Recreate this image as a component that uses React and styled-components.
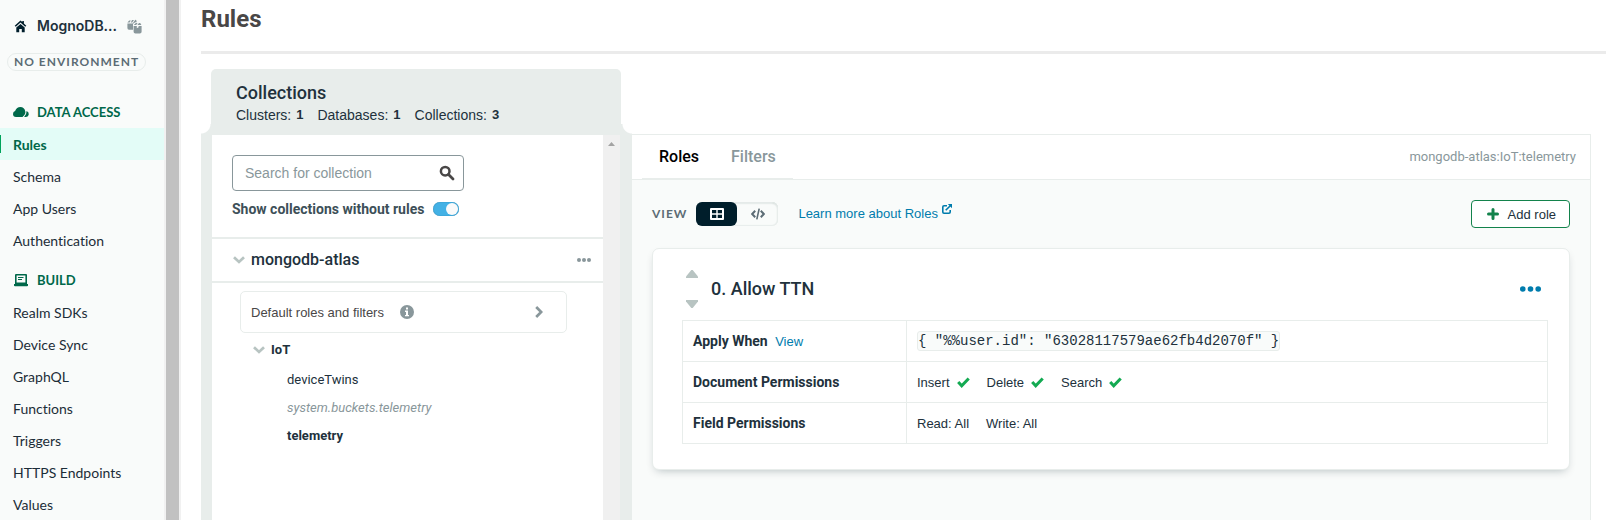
import React from "react";
import styled, { createGlobalStyle, css } from "styled-components";

const Global = createGlobalStyle`
  *, *::before, *::after { box-sizing: border-box; }
  body { margin: 0; background: #fff; }
  body, button, input { font-family: "Liberation Sans", Arial, sans-serif; }
  button { padding: 0; border: 0; background: none; color: inherit; cursor: pointer; }
  h1, h2, h3, ul { margin: 0; padding: 0; }
  ul { list-style: none; }
  a { text-decoration: none; }
  svg { display: block; flex: none; }
`;

const Shell = styled.div`
  display: flex;
  height: 100vh;
  overflow: hidden;
  color: #21313c;
  font-size: 13px;
`;

/* Sidebar */
const Sidebar = styled.nav`
  flex: none;
  width: 164px;
  background: #f9fbfa;
  font-family: Lato, sans-serif;
  font-variant-ligatures: none;
  overflow: hidden;
`;

const AppHeader = styled.div`
  display: flex;
  align-items: center;
  height: 52px;
  padding: 0 22px 0 14px;
  color: #001e2b;
`;

const AppName = styled.span`
  flex: 1;
  margin-left: 10px;
  font: 600 14px/20px Inter, sans-serif;
  color: #21313c;
`;

const Environment = styled.div`
  display: inline-block;
  margin: 1px 0 0 7px;
  padding: 0 6px;
  border: 1px solid #e8edeb;
  border-radius: 9px;
  color: #5c6c75;
  font-size: 12px;
  font-weight: 700;
  line-height: 16px;
  letter-spacing: 1px;
`;

const SectionTitle = styled.h2`
  display: flex;
  align-items: center;
  gap: 8px;
  height: 32px;
  padding-left: 13px;
  color: #00684a;
  font-size: 13px;
  font-weight: 700;
`;

const Section = styled.section`
  margin-top: ${(p) => (p.$first ? "25px" : "8px")};
`;

const NavLink = styled.a`
  display: flex;
  align-items: center;
  height: 32px;
  padding-left: 13px;
  color: #1c2d38;
  font-size: 14px;
  ${(p) =>
    p.$active &&
    css`
      background: linear-gradient(#00a35c, #00a35c) left center / 1px 18px no-repeat, #e3fcf7;
      color: #00684a;
      font-weight: 700;
    `}
`;

const PageScroll = styled.div`
  flex: none;
  width: 17px;
  padding: 0 2px;
  background: #f1f1f1;
  &::before {
    content: "";
    display: block;
    height: 100%;
    background: #c1c1c1;
  }
`;

/* Main column */
const Main = styled.main`
  flex: 1;
  min-width: 0;
  display: flex;
  flex-direction: column;
  padding-left: 20px;
`;

const PageTitle = styled.h1`
  height: 54px;
  padding-top: 5px;
  border-bottom: 3px solid #ebebeb;
  color: #494747;
  font: 700 24px/28px Roboto, sans-serif;
`;

const Workspace = styled.div`
  flex: 1;
  min-height: 0;
  display: flex;
  align-items: stretch;
  padding: 15px 15px 0 0;
`;

const CollectionsColumn = styled.div`
  flex: none;
  width: 431px;
  display: flex;
  flex-direction: column;
`;

const TabRow = styled.div`
  display: flex;
  align-items: flex-end;
`;

const Notch = styled.span`
  flex: none;
  width: ${(p) => (p.$side === "left" ? "10px" : "11px")};
  height: 10px;
  background: radial-gradient(circle at ${(p) => (p.$side === "left" ? "0 0" : "100% 0")}, transparent 9px, #e8edeb 10px);
`;

const CollectionsTab = styled.header`
  flex: 1;
  height: 65px;
  padding: 14px 25px 0;
  border-radius: 5px 5px 0 0;
  background: #e8edeb;
`;

const CollectionsTitle = styled.h2`
  font: 500 18px/20px Roboto, sans-serif;
`;

const Stats = styled.dl`
  display: flex;
  gap: 14px;
  margin: 0;
  font-size: 14px;
  line-height: 24px;
`;

const Stat = styled.div`
  display: flex;
  gap: 5px;
  dd { margin: 0; font-weight: 700; font-size: 13px; }
`;

const CollectionsFrame = styled.div`
  flex: 1;
  min-height: 0;
  display: flex;
  border: solid #e8edeb;
  border-width: 1px 12px 0 11px;
`;

const CollectionsPanel = styled.div`
  flex: 1;
  min-width: 0;
`;

const PanelScroll = styled.div`
  flex: none;
  width: 17px;
  padding: 7px 5px;
  background: #f0f0f0;
`;

const Filters = styled.div`
  padding: 20px 20px 0;
  height: 102px;
`;

const SearchBox = styled.label`
  display: flex;
  align-items: center;
  width: 232px;
  height: 36px;
  padding: 0 8px 0 12px;
  border: 1px solid #89979b;
  border-radius: 4px;
  input {
    flex: 1;
    min-width: 0;
    padding: 0;
    border: 0;
    outline: 0;
    background: none;
    font-size: 14px;
    color: #21313c;
  }
  input::placeholder { color: #89979b; opacity: 1; }
`;

const SwitchLabel = styled.label`
  display: flex;
  align-items: center;
  gap: 9px;
  margin-top: 10px;
  color: #3d4f58;
  font: 700 14px/16px Roboto, sans-serif;
`;

const Switch = styled.input`
  appearance: none;
  display: flex;
  justify-content: flex-end;
  width: 26px;
  height: 14px;
  margin: 0;
  padding: 1px;
  border-radius: 7px;
  background: #43b1e5;
  box-shadow: inset 0 0 1px #0b5c85;
  &::before {
    content: "";
    width: 12px;
    height: 12px;
    border-radius: 50%;
    background: #fafafa;
  }
`;

const ClusterRow = styled.div`
  display: flex;
  align-items: center;
  height: 46px;
  padding: 0 12px 0 21px;
  border: solid #e8edeb;
  border-width: 2px 0;
`;

const ClusterName = styled.h3`
  flex: 1;
  margin-left: 6px;
  font: 500 16px/20px Roboto, sans-serif;
`;

const DefaultRoles = styled.button`
  display: flex;
  align-items: center;
  width: 327px;
  height: 42px;
  margin: 8px 0 0 28px;
  padding: 0 23px 0 10px;
  border: 1px solid #e8edeb;
  border-radius: 5px;
  color: #494747;
  font-size: 13px;
  span { margin-right: 16px; }
  svg:last-child { margin-left: auto; }
`;

const DatabaseRow = styled.div`
  display: flex;
  align-items: center;
  gap: 6px;
  height: 33px;
  padding-left: 41px;
  font: 700 13px/16px Roboto, sans-serif;
`;

const CollectionLink = styled.a`
  display: block;
  height: 28px;
  padding-left: 75px;
  font: 13px/28px Roboto, sans-serif;
  color: ${(p) => (p.$system ? "#89979b" : "#21313c")};
  font-style: ${(p) => (p.$system ? "italic" : "normal")};
  font-weight: ${(p) => (p.$active ? 700 : 400)};
`;

/* Rules panel */
const RulesPanel = styled.section`
  flex: 1;
  min-width: 0;
  margin-top: 65px;
  border: solid #e8edeb;
  border-width: 1px 1px 0 0;
  background: #f9fbfa;
`;

const RulesHeader = styled.header`
  display: flex;
  justify-content: space-between;
  align-items: center;
  height: 45px;
  padding: 0 14px 0 10px;
  border-bottom: 1px solid #e8edeb;
  background: #fff;
  color: #89979b;
`;

const Tabs = styled.div`
  display: flex;
  align-self: stretch;
  gap: 32px;
  padding: 0 17px;
  border-bottom: 1px solid #e8edeb;
`;

const Tab = styled.button`
  color: ${(p) => (p["aria-selected"] ? "#000" : "#89979b")};
  font: 500 16px/20px Roboto, sans-serif;
`;

const Crumb = styled.span`
  font: 400 13px/20px Roboto, sans-serif;
`;

const Toolbar = styled.div`
  display: flex;
  align-items: center;
  height: 68px;
  padding: 0 20px;
`;

const ViewLabel = styled.span`
  margin-right: 9px;
  color: #5c6c75;
  font: 700 12px/20px Lato, sans-serif;
  letter-spacing: 1px;
`;

const Segmented = styled.div`
  display: flex;
  border-radius: 6px;
  background: #f9fbfa;
  box-shadow: inset 0 0 1px 1px #e8edeb, inset 0 1px 2px #b8c4c2;
`;

const Segment = styled.button`
  display: grid;
  place-items: center;
  width: 41px;
  height: 24px;
  border-radius: 6px;
  color: ${(p) => (p["aria-pressed"] ? "#fff" : "#5c6c75")};
  background: ${(p) => (p["aria-pressed"] ? "#001e2b" : "transparent")};
`;

const LearnLink = styled.a`
  display: flex;
  gap: 4px;
  margin-left: 20px;
  color: #007cad;
  line-height: 20px;
`;

const AddRole = styled.button`
  display: flex;
  align-items: center;
  gap: 9px;
  height: 28px;
  margin-left: auto;
  padding: 0 13px 0 15px;
  border: 1px solid #13834c;
  border-radius: 4px;
  background: #fff;
  color: #21313c;
  font-size: 13px;
  svg { color: #13834c; }
`;

const RoleCard = styled.article`
  margin: 0 20px;
  padding: 15px 21px 25px 29px;
  border: 1px solid #e8edeb;
  border-radius: 7px;
  background: #fff;
  box-shadow: 0 4px 10px -4px rgba(0, 30, 43, 0.3);
`;

const RoleHeader = styled.header`
  display: flex;
  align-items: center;
  height: 49px;
  margin-bottom: 7px;
  padding: 0 7px 0 4px;
`;

const Reorder = styled.div`
  display: flex;
  flex-direction: column;
  gap: 22px;
  color: #b8c4c2;
  button { display: block; }
`;

const RoleTitle = styled.h2`
  flex: 1;
  margin-left: 13px;
  font: 500 18px/24px Roboto, sans-serif;
`;

const DotsButton = styled.button`
  color: ${(p) => (p.$accent ? "#007cad" : "#89979b")};
`;

const Permissions = styled.table`
  width: 100%;
  border-collapse: collapse;
  th, td {
    height: 41px;
    padding: 0 10px;
    border: 1px solid #e8edeb;
    text-align: left;
  }
  th { width: 224px; font: 700 14px/20px Roboto, sans-serif; white-space: nowrap; }
  th a { margin-left: 4px; color: #007cad; font: 13px/20px "Liberation Sans", Arial, sans-serif; }
`;

const Expression = styled.code`
  display: inline-block;
  border: 1px solid #e8edeb;
  border-radius: 3px;
  background: #f9fbfa;
  font: 14px/18px "Liberation Mono", monospace;
  white-space: nowrap;
`;

const Grants = styled.div`
  display: flex;
  gap: 17px;
`;

const Grant = styled.span`
  display: flex;
  align-items: center;
  gap: 7px;
`;

const HomeIcon = () => (
  <svg width="13" height="13" viewBox="0 0 13 13" fill="currentColor">
    <path d="M6.5.5 0.7 5.7l1.1 1L6.5 2.6l4.7 4.1 1.1-1L9.9 3.500V1H8.300v1.100z" />
    <path d="M6.500 4 2.300 7.600v4.700h2.900V9h2.600v3.300h2.900V7.600z" />
  </svg>
);

const CubesIcon = () => (
  <svg width="15" height="15" viewBox="0 0 15 15" fill="#89979b">
    <path d="M2.200 1.500h1.600L2.600 3.500H.4zM5 1h2L5.200 3.500H3.800zM8.300.8q1 0 1.200 1.200l.2 1.200H8.300L6 4.700v6H2q-1.600 0-1.600-1.600V4.500h5.200z" />
    <path d="M8.800 4h1.800L9.200 6H6.800zM12 4h1.200l1.200 2h-4z" />
    <path d="M6.600 6.900h3.200v2.400l1.800-1V6.900h3v5.800q0 1.800-1.800 1.800H8.400q-1.800 0-1.800-1.800z" />
  </svg>
);

const CloudIcon = () => (
  <svg width="16" height="12" viewBox="0 0 16 12" fill="currentColor">
    <path d="M3 11Q0 10.700 0 7.900 0 5.500 2.100 4.900 3.700 1 7.300 1q4.200 0 5 4.600.6 2.800-2.800 5.400z" />
    <path d="M13.600 5q2.300.9 2.200 3.200-.3 2.400-2.800 2.800h-1.900q2.600-2.300 2.500-6z" />
  </svg>
);

const LaptopIcon = () => (
  <svg width="16" height="13" viewBox="0 0 16 13" fill="currentColor">
    <path fillRule="evenodd" d="M3 0h10q1 0 1 1v9H2V1q0-1 1-1zM3.600 1.500v7h8.800v-7z" />
    <path d="M1 10h14v1.500q0 .8-1 .8H2q-1 0-1-.8zM5 3h5.500v1H5zM5 5h4v1H5z" />
  </svg>
);

const SearchIcon = () => (
  <svg width="16" height="16" viewBox="0 0 16 16" fill="none" stroke="#494747">
    <circle cx="6.200" cy="6.200" r="4.300" strokeWidth="2.500" />
    <path d="m9.500 9.500 4.500 4.500" strokeWidth="2.800" strokeLinecap="round" />
  </svg>
);

const ChevronDown = () => (
  <svg width="12" height="8" viewBox="0 0 12 8" fill="none" stroke="#b8c4c2" strokeWidth="2.700">
    <path d="m1 1.200 5 4.800 5-4.800" />
  </svg>
);

const ChevronRight = () => (
  <svg width="8" height="12" viewBox="0 0 8 12" fill="none" stroke="#89979b" strokeWidth="2.700">
    <path d="m1.200 1 5 5-5 5" />
  </svg>
);

const InfoIcon = () => (
  <svg width="14" height="14" viewBox="0 0 14 14">
    <circle cx="7" cy="7" r="7" fill="#89979b" />
    <path d="M6 2.500h2v2H6zM5 5.500h3v4.400h1v1.400H5V9.900h1V7H5z" fill="#fff" />
  </svg>
);

const Dots = ({ size = 14, r = 2 }) => (
  <svg width={size} height={6} viewBox={`0 0 ${size} 6`} fill="currentColor">
    <circle cx={r} cy="3" r={r} />
    <circle cx={size / 2} cy="3" r={r} />
    <circle cx={size - r} cy="3" r={r} />
  </svg>
);

const Triangle = ({ down, width = 12, height = 8 }) => (
  <svg width={width} height={height} viewBox="0 0 12 8" fill="currentColor">
    <path d={down ? "M0 0h12v1.500L6.700 8H5.300L0 1.500z" : "M0 8h12V6.500L6.700 0H5.300L0 6.500z"} />
  </svg>
);

const GridIcon = () => (
  <svg width="14" height="12" viewBox="0 0 14 12" fill="currentColor">
    <path fillRule="evenodd" d="M1 0h12q1 0 1 1v10q0 1-1 1H1q-1 0-1-1V1q0-1 1-1zM2 2v3.300h4.300V2zM7.700 2v3.300H12V2zM2 6.700V10h4.300V6.700zM7.700 6.700V10H12V6.700z" />
  </svg>
);

const CodeIcon = () => (
  <svg width="14" height="12" viewBox="0 0 14 12" fill="none" stroke="currentColor" strokeWidth="2">
    <path d="M4.200 2.800 1.200 6l3 3.200M9.800 2.800l3 3.200-3 3.200" />
    <path d="M8.200.6 5.800 11.400" strokeWidth="1.600" />
  </svg>
);

const ExternalIcon = () => (
  <svg width="10" height="10" viewBox="0 0 10 10" fill="none" stroke="currentColor" strokeWidth="1.600">
    <path d="M5 1.700H2Q.8 1.700.8 3v5Q.8 9.200 2 9.200h5Q8.200 9.200 8.200 8V6M3.700 6.300 8.300 1.700" />
    <path d="M5.800 0H10v4.200z" fill="currentColor" stroke="none" />
  </svg>
);

const PlusIcon = () => (
  <svg width="12" height="12" viewBox="0 0 12 12" fill="none" stroke="currentColor" strokeWidth="3" strokeLinecap="round">
    <path d="M6 1.500v9M1.500 6h9" />
  </svg>
);

const CheckIcon = () => (
  <svg width="13" height="11" viewBox="0 0 13 11" fill="none" stroke="#13aa52" strokeWidth="3">
    <path d="m1.200 5 3.500 3.800 7-7.300" />
  </svg>
);

const buildLinks = ["Realm SDKs", "Device Sync", "GraphQL", "Functions", "Triggers", "HTTPS Endpoints", "Values"];
const accessLinks = ["Rules", "Schema", "App Users", "Authentication"];
const stats = [["Clusters:", 1], ["Databases:", 1], ["Collections:", 3]];

const NavSection = ({ icon, title, links, active, first }) => (
  <Section $first={first}>
    <SectionTitle>{icon}{title}</SectionTitle>
    <ul>
      {links.map((name) => (
        <li key={name}>
          <NavLink href="#" $active={name === active}>{name}</NavLink>
        </li>
      ))}
    </ul>
  </Section>
);

export default function App() {
  return (
    <>
      <Global />
      <Shell>
        <Sidebar>
          <AppHeader>
            <HomeIcon />
            <AppName>MognoDB...</AppName>
            <CubesIcon />
          </AppHeader>
          <Environment>NO ENVIRONMENT</Environment>
          <NavSection first icon={<CloudIcon />} title="DATA ACCESS" links={accessLinks} active="Rules" />
          <NavSection icon={<LaptopIcon />} title="BUILD" links={buildLinks} />
        </Sidebar>
        <PageScroll />
        <Main>
          <PageTitle>Rules</PageTitle>
          <Workspace>
            <CollectionsColumn>
              <TabRow>
                <Notch $side="left" />
                <CollectionsTab>
                  <CollectionsTitle>Collections</CollectionsTitle>
                  <Stats>
                    {stats.map(([name, value]) => (
                      <Stat key={name}><dt>{name}</dt><dd>{value}</dd></Stat>
                    ))}
                  </Stats>
                </CollectionsTab>
                <Notch $side="right" />
              </TabRow>
              <CollectionsFrame>
                <CollectionsPanel>
                  <Filters>
                    <SearchBox>
                      <input type="text" aria-label="Search for collection" placeholder="Search for collection" />
                      <SearchIcon />
                    </SearchBox>
                    <SwitchLabel>
                      Show collections without rules
                      <Switch type="checkbox" defaultChecked />
                    </SwitchLabel>
                  </Filters>
                  <ClusterRow>
                    <ChevronDown />
                    <ClusterName>mongodb-atlas</ClusterName>
                    <DotsButton aria-label="Cluster actions"><Dots /></DotsButton>
                  </ClusterRow>
                  <DefaultRoles>
                    <span>Default roles and filters</span>
                    <InfoIcon />
                    <ChevronRight />
                  </DefaultRoles>
                  <DatabaseRow><ChevronDown />IoT</DatabaseRow>
                  <CollectionLink href="#">deviceTwins</CollectionLink>
                  <CollectionLink href="#" $system>system.buckets.telemetry</CollectionLink>
                  <CollectionLink href="#" $active>telemetry</CollectionLink>
                </CollectionsPanel>
                <PanelScroll><svg width="7" height="4" viewBox="0 0 7 4" fill="#a3a3a3"><path d="M0 4 3.500 0 7 4z" /></svg></PanelScroll>
              </CollectionsFrame>
            </CollectionsColumn>
            <RulesPanel>
              <RulesHeader>
                <Tabs role="tablist">
                  <Tab role="tab" aria-selected={true}>Roles</Tab>
                  <Tab role="tab" aria-selected={false}>Filters</Tab>
                </Tabs>
                <Crumb>mongodb-atlas:IoT:telemetry</Crumb>
              </RulesHeader>
              <Toolbar>
                <ViewLabel>VIEW</ViewLabel>
                <Segmented>
                  <Segment aria-label="Table view" aria-pressed={true}><GridIcon /></Segment>
                  <Segment aria-label="Code view" aria-pressed={false}><CodeIcon /></Segment>
                </Segmented>
                <LearnLink href="#">Learn more about Roles<ExternalIcon /></LearnLink>
                <AddRole><PlusIcon />Add role</AddRole>
              </Toolbar>
              <RoleCard>
                <RoleHeader>
                  <Reorder>
                    <button aria-label="Move up"><Triangle /></button>
                    <button aria-label="Move down"><Triangle down /></button>
                  </Reorder>
                  <RoleTitle>0. Allow TTN</RoleTitle>
                  <DotsButton $accent aria-label="Role actions"><Dots size={21} r={2.8} /></DotsButton>
                </RoleHeader>
                <Permissions>
                  <tbody>
                    <tr>
                      <th scope="row">Apply When <a href="#">View</a></th>
                      <td><Expression>{'{ "%%user.id": "63028117579ae62fb4d2070f" }'}</Expression></td>
                    </tr>
                    <tr>
                      <th scope="row">Document Permissions</th>
                      <td>
                        <Grants>
                          {["Insert", "Delete", "Search"].map((name) => (
                            <Grant key={name}>{name}<CheckIcon /></Grant>
                          ))}
                        </Grants>
                      </td>
                    </tr>
                    <tr>
                      <th scope="row">Field Permissions</th>
                      <td>
                        <Grants><Grant>Read: All</Grant><Grant>Write: All</Grant></Grants>
                      </td>
                    </tr>
                  </tbody>
                </Permissions>
              </RoleCard>
            </RulesPanel>
          </Workspace>
        </Main>
      </Shell>
    </>
  );
}
